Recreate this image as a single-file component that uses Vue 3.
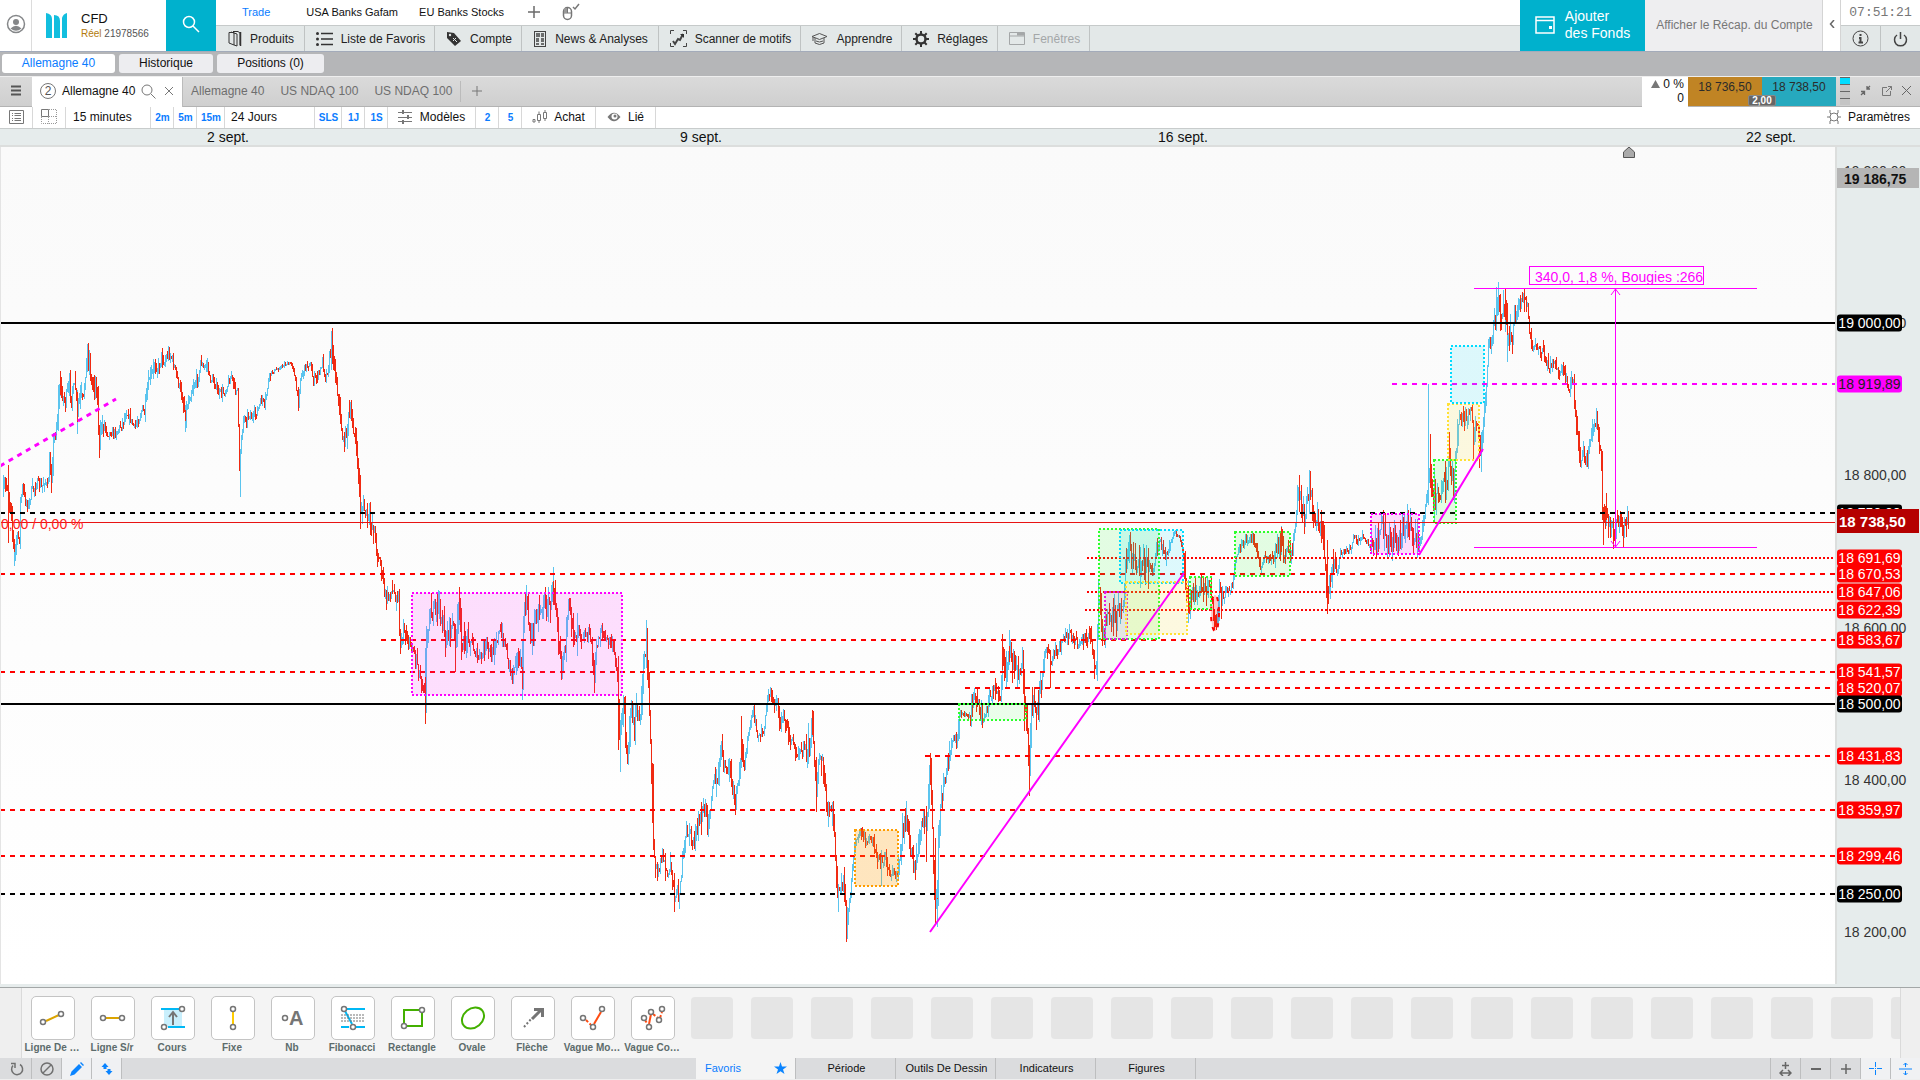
<script setup>
import { ref } from 'vue'

const espaces = ['Trade', 'USA Banks Gafam', 'EU Banks Stocks']
const vues = ['Allemagne 40', 'Historique', 'Positions (0)']
const vueActive = ref('Allemagne 40')
const autresOnglets = ['Allemagne 40', 'US NDAQ 100', 'US NDAQ 100']

const ongletsBas = ['Favoris', 'Période', 'Outils De Dessin', 'Indicateurs', 'Figures']
const ongletBas = ref('Favoris')

const VUE = { haut: 147, largeur: 1835, hauteur: 837 }

const prixVersY = (prix) => 323 + (19000 - prix) * 0.7613
const topPourcent = (y) => `${((y - VUE.haut) / VUE.hauteur) * 100}%`

const dates = [
  { texte: '2 sept.', x: 228 },
  { texte: '9 sept.', x: 701 },
  { texte: '16 sept.', x: 1183 },
  { texte: '22 sept.', x: 1771 },
]

const graduations = ['19 200,00', '19 000,00', '18 800,00', '18 600,00', '18 400,00', '18 200,00']

const niveaux = [
  { texte: '19 000,00', x: 0, type: 'plein', ton: 'noir' },
  { texte: '18 919,89', x: 1392, type: 'tiret', ton: 'magenta' },
  { texte: '18 750,00', x: 0, type: 'tiret', ton: 'noir' },
  { texte: '18 691,69', x: 1087, type: 'point', ton: 'rouge' },
  { texte: '18 670,53', x: 0, type: 'tiret', ton: 'rouge' },
  { texte: '18 647,06', x: 1087, type: 'point', ton: 'rouge' },
  { texte: '18 622,39', x: 1085, type: 'point', ton: 'rouge' },
  { texte: '18 583,67', x: 381, type: 'tiret', ton: 'rouge' },
  { texte: '18 541,57', x: 0, type: 'tiret', ton: 'rouge' },
  { texte: '18 520,07', x: 965, type: 'tiret', ton: 'rouge' },
  { texte: '18 500,00', x: 0, type: 'plein', ton: 'noir' },
  { texte: '18 431,83', x: 925, type: 'tiret', ton: 'rouge' },
  { texte: '18 359,97', x: 0, type: 'tiret', ton: 'rouge' },
  { texte: '18 299,46', x: 0, type: 'tiret', ton: 'rouge' },
  { texte: '18 250,00', x: 0, type: 'tiret', ton: 'noir' },
]

const enNombre = (texte) => Number(texte.replace(' ', '').replace(',', '.'))
const yNiveau = (texte) => Math.round(prixVersY(enNombre(texte)))

// x1, y1, x2, y2, couleur, opacité du fond
const zones = [
  [412, 593, 622, 695, '#ff00ff', 0.12],
  [855, 830, 898, 886, '#ff9d00', 0.25],
  [959, 704, 1026, 720, '#2bff2b', 0.09],
  [1099, 529, 1159, 639, '#2bff2b', 0.12],
  [1120, 530, 1183, 583, '#00dcff', 0.12],
  [1105, 592, 1127, 639, '#e51be5', 0.1],
  [1126, 582, 1187, 634, '#ffe135', 0.14],
  [1190, 577, 1211, 609, '#2bff2b', 0.12],
  [1235, 532, 1290, 576, '#2bff2b', 0.12],
  [1371, 514, 1419, 554, '#ff00ff', 0.12],
  [1434, 460, 1456, 523, '#2bff2b', 0.12],
  [1448, 404, 1479, 460, '#ffe135', 0.14],
  [1451, 346, 1484, 403, '#00dcff', 0.12],
]

// amplitude des mèches, puis les points de passage du cours
const parcours = [
  [9, '2,495 4,487 7,484 9,500 11,510 12,530 14,552 16,540 19,536'],
  [6, '20,502 22,487 24,497 28,505 31,491 37,483 41,487 44,480 47,487'],
  [10, '49,468 51,474 53,443 56,427 58,400 60,385 63,397 65,400 69,387 71,393 75,387 77,412 79,397 83,400 85,370 87,352 89,360 91,383 95,380 97,400 99,445 101,427 104,423'],
  [5, '107,433 112,432 116,432 119,427 122,423 126,412 129,417 134,427 138,420 142,408 144,413'],
  [7, '147,390 149,377 152,373 154,363 158,368 161,355 164,363 168,352 171,357 175,370 178,383 182,398 185,415 188,400 192,387 196,380 199,373'],
  [5, '200,360 203,368 207,363 209,378 214,382 218,393 224,392 228,382 231,375 234,388 237,388 238,427 239,460 241,437 243,417 246,418 249,413 252,418 257,410 262,398 264,407 268,380 270,373'],
  [2, '275,370 284,364 291,363 293,368'],
  [5, '295,383 298,402 300,377 304,368 309,362 313,380 316,377 320,370 322,360 325,377 328,367'],
  [10, '331,345 332,348 335,373 338,397 340,420 343,443 346,430 348,417 351,417 354,433 357,460 359,487 360,510 363,507 367,517 371,523'],
  [9, '374,530 376,547 379,560 381,567 384,593 387,600 390,590 394,593 398,597 399,630 401,647 403,627 407,640 412,647 416,657 420,677 424,687'],
  [13, '426,637 429,613 433,613 438,603 440,613 445,640 449,627 453,627 456,635 459,607 461,637 464,650'],
  [9, '467,633 473,647 477,657 481,657 486,643 491,657 495,640 499,633 505,643 508,660 512,673 516,653 520,663 522,685'],
  [13, '523,620 526,600 528,620 531,640 535,613 539,610 543,603 547,607 550,603 553,585 555,597 558,633 561,663 565,640 568,613 571,613 575,637 578,620'],
  [7, '581,637 588,633 591,643 594,680 596,647 601,627 605,640 610,640 613,650 617,670'],
  [14, '619,740 621,720 623,707 625,733 627,750 629,727 631,708 634,727 637,713 640,723 642,690 643,663 646,645 648,680 650,740 652,807 653,840'],
  [9, '655,863 659,867 662,853 665,867 668,877 670,863 673,883 674,895 678,895 680,880 683,853 686,833 689,830 692,842 696,833 700,817'],
  [12, '703,810 707,813 710,803 713,777 717,787 719,760 722,750 726,777 729,760 732,790 734,798 738,787 741,745 744,763'],
  [6, '747,740 750,723 753,713 756,730 759,737 764,727 767,697 771,695 774,703 777,697'],
  [7, '779,727 782,713 786,727 791,740 796,752 801,747 805,750'],
  [12, '809,743 812,722 814,753 816,793 818,767 822,757 824,790 827,813 830,807 833,817 835,857 837,893 840,893 843,877 845,907 846,930 849,907'],
  [6, '851,880 854,847 857,837 862,833 865,843 872,835 876,857 881,863 885,857 889,870 897,876'],
  [12, '899,857 902,830 905,820 908,830 910,850 914,868 917,853 920,830 923,817 926,823 928,793 930,770 931,800 933,857 935,905 937,900 938,840 941,797 945,777 949,757'],
  [8, '952,740 957,737 959,710'],
  [3, '963,715 969,715'],
  [9, '973,700 977,703 981,715 985,718 987,707 992,690 996,687 1000,697'],
  [15, '1002,657 1005,673 1009,650 1013,657 1018,673 1022,660 1024,707 1027,740 1029,767 1031,713 1034,700 1038,703 1042,670'],
  [7, '1046,643 1050,660 1055,653 1061,643 1068,633 1073,637 1078,648 1082,638 1088,637 1091,637 1094,663 1096,663'],
  [15, '1098,607 1099,593 1101,620 1103,630 1108,620 1112,617 1116,617 1119,600 1123,597'],
  [14, '1125,573 1128,547 1131,560 1133,552 1136,573 1140,560 1143,563 1145,572 1149,563'],
  [6, '1153,570 1156,550 1159,537 1162,547 1166,557 1170,540'],
  [2, '1175,532 1179,537 1183,553'],
  [11, '1185,583 1188,603 1192,590 1197,597 1200,590 1203,593 1208,585 1211,600 1213,607 1216,615 1219,593 1222,600'],
  [5, '1227,590 1232,587 1234,563 1237,553 1242,543 1247,543 1251,535 1255,543 1257,557 1261,567 1265,557 1273,558'],
  [11, '1278,550 1281,543 1284,557 1287,547 1290,565 1292,547 1295,527 1298,490 1301,500 1304,517 1307,497 1310,487 1312,507 1315,517 1318,523'],
  [12, '1323,537 1325,560 1327,590 1329,580 1332,570 1337,568'],
  [4, '1340,553 1345,550 1349,550 1354,535 1357,542 1362,537 1366,542 1370,548'],
  [12, '1374,550 1378,533 1382,527 1385,537 1389,543 1394,537 1398,543 1402,530 1405,528 1407,518 1410,530 1413,540 1415,533 1419,543'],
  [6, '1420,540 1423,520 1427,497'],
  [14, '1430,457 1432,490 1435,503 1437,490 1440,497 1443,480 1447,487 1449,450 1451,477 1453,490 1455,457 1457,433 1459,413'],
  [9, '1462,420 1467,413 1471,413 1473,440 1476,417 1479,437 1481,447 1483,417 1486,383 1488,347 1491,340 1493,323 1496,317'],
  [14, '1497,302 1500,305 1503,315 1505,307 1507,335 1509,335 1512,335 1514,315'],
  [6, '1518,305 1523,298 1524,297 1527,307 1529,330 1532,347 1537,345 1540,350 1543,348 1546,363 1550,367 1554,360 1558,373 1563,367'],
  [9, '1567,383 1569,390 1571,377 1573,383 1575,413 1577,440 1580,460 1583,453 1586,463 1589,440 1593,427 1596,417 1598,440 1601,463'],
  [13, '1602,513 1604,527 1607,515 1611,530 1615,527 1619,525 1623,532 1626,523'],
]

// x, haut, bas, hausse ?
const pointes = [
  [8, 465, 543, 0], [14, 545, 566, 1], [87, 344, 372, 1], [77, 390, 434, 1], [99, 430, 458, 0],
  [60, 371, 395, 0], [185, 405, 432, 1], [240, 450, 497, 1], [239, 427, 471, 0], [331, 331, 370, 1],
  [332, 328, 352, 0], [360, 475, 529, 0], [425, 677, 724, 0], [426, 637, 713, 1], [438, 590, 612, 1],
  [455, 630, 672, 0], [459, 587, 620, 0], [522, 640, 700, 1], [553, 567, 600, 1], [594, 660, 693, 0],
  [618, 665, 750, 0], [620, 720, 772, 1], [646, 620, 668, 1], [647, 628, 680, 0], [653, 764, 850, 0],
  [674, 890, 912, 0], [722, 734, 757, 0], [741, 716, 760, 0], [771, 688, 700, 0], [812, 710, 735, 0],
  [816, 757, 812, 0], [846, 920, 942, 0], [881, 850, 886, 1], [926, 806, 862, 0], [930, 753, 785, 0],
  [935, 838, 919, 0], [937, 880, 927, 1], [1002, 634, 670, 0], [1009, 630, 665, 1], [1024, 682, 731, 0],
  [1029, 745, 796, 0], [1050, 650, 688, 0], [1094, 655, 679, 0], [1098, 580, 640, 1], [1188, 580, 623, 1],
  [1185, 551, 590, 0], [1281, 527, 552, 0], [1299, 475, 500, 0], [1310, 471, 500, 0], [1327, 540, 614, 0],
  [1330, 575, 599, 1], [1407, 505, 525, 1], [1428, 384, 502, 1], [1430, 434, 488, 0], [1434, 470, 523, 1],
  [1449, 432, 460, 0], [1473, 420, 459, 0], [1479, 445, 468, 0], [1481, 440, 472, 1], [1496, 287, 320, 1],
  [1505, 289, 320, 0], [1507, 325, 362, 1], [1524, 289, 312, 0], [1602, 451, 520, 0], [1603, 510, 545, 0],
  [1606, 493, 520, 0], [1623, 525, 547, 0], [1627, 506, 525, 1], [1628, 511, 529, 0],
]

function tracerBougies() {
  let graine = 7
  const alea = () => {
    graine = (graine * 16807) % 2147483647
    return graine / 2147483647
  }
  const points = parcours.flatMap(([amp, suite]) =>
    suite.split(' ').map((p) => [...p.split(',').map(Number), amp]),
  )
  const traces = { hausse: '', baisse: '' }
  let precedent = points[0][1]
  for (let i = 1; i < points.length; i++) {
    const [x0, y0] = points[i - 1]
    const [x1, y1, amp] = points[i]
    for (let x = x0 + 1; x <= x1; x++) {
      const y = y0 + ((y1 - y0) * (x - x0)) / (x1 - x0) + (alea() - 0.5) * amp * 1.4
      const haut = Math.round(Math.min(y, precedent) - alea() ** 2 * amp * 1.3)
      const bas = Math.round(Math.max(y, precedent) + alea() ** 2 * amp * 1.3) + 1
      traces[y > precedent ? 'baisse' : 'hausse'] += `M${x + 0.5} ${haut}V${bas}`
      precedent = y
    }
  }
  for (const [x, haut, bas, hausse] of pointes) {
    traces[hausse ? 'hausse' : 'baisse'] += `M${x + 0.5} ${haut}V${bas}`
  }
  return traces
}

const bougies = tracerBougies()

// t : traits [couleur, chemin, épaisseur, tirets], c : poignées rondes
const outils = [
  { nom: 'Ligne De …', t: [['#dba400', 'M15 25L28 19', 2]], c: [[12, 26], [30, 18]] },
  { nom: 'Ligne S/r', t: [['#dba400', 'M15 22H28', 2]], c: [[12, 22], [31, 22]] },
  { nom: 'Cours', fond: true, t: [['#00b8f5', 'M10 13H28M17 31H34', 2], ['#757575', 'M22 29V17M18 21L22 16L26 21', 2]], c: [[31, 13], [13, 31]] },
  { nom: 'Fixe', t: [['#ffcc00', 'M22 16V28', 2]], c: [[22, 13], [22, 31]] },
  { nom: 'Nb', lettre: 'A', t: [], c: [[14, 22]] },
  { nom: 'Fibonacci', t: [['#00b8f5', 'M16 13H34M10 31H18M25 31H34M14 15L21 28', 2], ['#757575', 'M10 19H34M10 22H34M10 25H34', 1, '2 1']], c: [[13, 13], [22, 31]] },
  { nom: 'Rectangle', t: [['#43b000', 'M28 14H13V27M16 30H31V17', 2]], c: [[31, 14], [13, 30]] },
  { nom: 'Ovale', ovale: true, t: [], c: [] },
  { nom: 'Flèche', t: [['#757575', 'M21 23L31 13M23 13.500H31.500V21', 3], ['#757575', 'M13 31L21 22', 2, '2 2']], c: [] },
  { nom: 'Vague Mo…', t: [['#ff4c12', 'M15 24L20 29', 2, '3 2'], ['#ff4c12', 'M23 28L30 16', 2]], c: [[12, 22], [22, 31], [31, 13]] },
  { nom: 'Vague Co…', t: [['#ff4c12', 'M14 24L17 29M22 18L27 22M29 22L31 16', 2, '3 2'], ['#ff4c12', 'M18 28L20 18', 2]], c: [[13, 22], [18, 31], [20, 16], [28, 24], [31, 13]] },
]
</script>

<template>
  <div class="plateforme">
    <header class="entete">
      <button class="profil" aria-label="Profil">
        <svg width="20" height="20" viewBox="0 0 20 20">
          <circle cx="10" cy="10" r="8.500" fill="none" stroke="#858789" stroke-width="1.500" />
          <circle cx="10" cy="8" r="3" fill="#858789" />
          <path d="M4.500 14.500Q10 9 15.500 14.500Q10 19 4.500 14.500Z" fill="#858789" />
        </svg>
      </button>
      <div class="compte">
        <svg width="22" height="26" viewBox="0 0 22 26" fill="#12bede">
          <path d="M0 0Q6 1 6 6V25H0ZM8 2Q14 2 14 8V25H8ZM16 5Q17 1 21 0V25H16Z" />
        </svg>
        <div>
          <div class="compte-type">CFD</div>
          <div class="compte-numero"><b>Réel</b> 21978566</div>
        </div>
      </div>
      <button class="recherche" aria-label="Rechercher">
        <svg width="20" height="20" viewBox="0 0 20 20" fill="none" stroke="#fff" stroke-width="1.500">
          <circle cx="8" cy="8" r="5.500" />
          <path d="M12 12L18 18" />
        </svg>
      </button>

      <div class="navigation">
        <nav class="espaces">
          <a v-for="(e, i) in espaces" :key="e" href="#" :class="{ actif: i === 0 }">{{ e }}</a>
          <button class="nu" aria-label="Ajouter un espace">
            <svg width="14" height="14" viewBox="0 0 14 14"><path d="M7 1V13M1 7H13" stroke="#6b6b6b" stroke-width="1.500" /></svg>
          </button>
          <button class="nu souris" aria-label="Un clic">
            <svg width="18" height="18" viewBox="0 0 18 18" fill="none" stroke="#777">
              <rect x="1.500" y="4.500" width="8" height="12" rx="4" stroke-width="1.500" />
              <path d="M1.500 10H9.500M5.500 4.500V10" />
              <path d="M11 4L13 6L17 1" stroke-width="1.500" />
              <rect x="2" y="5" width="3" height="5" fill="#999" stroke="none" />
            </svg>
          </button>
        </nav>
        <nav class="menu">
          <button class="m-produits">
            <svg width="14" height="16" viewBox="0 0 14 16" fill="none" stroke="#333">
              <path d="M1 1.500H6V14L1 12ZM3 1L9 3V15L6 14M5 .5H10L12 2V14" />
              <path d="M12.500 1V15" stroke-width="1.500" />
            </svg>Produits
          </button>
          <button class="m-favoris">
            <svg width="17" height="14" viewBox="0 0 17 14" fill="#333">
              <path d="M5 1.500H17M5 7H17M5 12.500H17" stroke="#333" stroke-width="1.500" />
              <circle cx="1.500" cy="1.500" r="1.500" /><circle cx="1.500" cy="7" r="1.500" /><circle cx="1.500" cy="12.500" r="1.500" />
            </svg>Liste de Favoris
          </button>
          <button class="m-compte">
            <svg width="16" height="16" viewBox="0 0 16 16">
              <path d="M1 1L8 2L15 10L9 15L1 7Z" fill="#333" />
              <circle cx="4" cy="4" r="1.200" fill="#e3e8e8" />
              <path d="M7 7L11 11M7 10L10 7" stroke="#e3e8e8" />
            </svg>Compte
          </button>
          <button class="m-news">
            <svg width="13" height="16" viewBox="0 0 13 16" fill="none" stroke="#444">
              <rect x=".5" y=".5" width="11" height="15" />
              <path d="M2 3H6M7 3H10M2 5H6M7 5H10M2 8H5M7 8H10M2 10H5M7 10H10M2 13H5M7 13H10" stroke-width="1.300" />
            </svg>News &amp; Analyses
          </button>
          <button class="m-scanner">
            <svg width="17" height="17" viewBox="0 0 17 17" fill="none" stroke="#444">
              <path d="M.5 4V.5H4M13 .5H16.500V4M16.500 13V16.500H13M4 16.500H.5V13" />
              <path d="M3 11L5 14L8 9L10 10L13 4" stroke-width="2" />
              <path d="M10 4H14V8Z" fill="#333" stroke="none" />
            </svg>Scanner de motifs
          </button>
          <button class="m-apprendre">
            <svg width="17" height="14" viewBox="0 0 17 14" fill="none" stroke="#555">
              <path d="M1 4.500L8.500 1.500L16 4.500L8.500 7.500ZM4 6V11Q8.500 14 13 11V6M2 5V9M5 9Q8.500 11 12 9" />
            </svg>Apprendre
          </button>
          <button class="m-reglages">
            <svg width="16" height="16" viewBox="0 0 16 16" fill="none" stroke="#333">
              <circle cx="8" cy="8" r="4.500" stroke-width="2.500" />
              <path d="M8 0V3M8 13V16M0 8H3M13 8H16M2.300 2.300L4.500 4.500M11.500 11.500L13.700 13.700M2.300 13.700L4.500 11.500M11.500 4.500L13.700 2.300" stroke-width="2" />
            </svg>Réglages
          </button>
          <button class="m-fenetres" disabled>
            <svg width="16" height="13" viewBox="0 0 16 13" fill="none" stroke="#a4a7a8">
              <path d="M.5 .5H15.500V12.500H.5ZM.5 4H15.500" /><path d="M8 2H15" stroke-width="3" />
            </svg>Fenêtres
          </button>
        </nav>
      </div>

      <button class="ajouter">
        <svg width="20" height="18" viewBox="0 0 20 18" fill="none" stroke="#fff" stroke-width="1.500">
          <path d="M1 1H19V17H1ZM1 4.500H19" /><path d="M14 11.500H17" stroke-width="3" />
        </svg>
        <span>Ajouter<br />des Fonds</span>
      </button>
      <button class="recap">Afficher le Récap. du Compte</button>
      <button class="replier" aria-label="Replier">
        <svg width="6" height="8" viewBox="0 0 6 8"><path d="M5 0L1.500 4L5 8" fill="none" stroke="#666" stroke-width="1.500" /></svg>
      </button>
      <div class="systeme">
        <time>07:51:21</time>
        <div class="systeme-boutons">
          <button aria-label="Informations">
            <svg width="17" height="17" viewBox="0 0 17 17" fill="none" stroke="#444">
              <circle cx="8.500" cy="8.500" r="7.500" /><path d="M8.500 4V6M7 8H8.500V12M6.500 12.500H11" stroke-width="2" />
            </svg>
          </button>
          <button aria-label="Déconnexion">
            <svg width="15" height="16" viewBox="0 0 15 16" fill="none" stroke="#444" stroke-width="1.500">
              <path d="M7.500 1V8M4 4A6 6 0 1 0 11 4" />
            </svg>
          </button>
        </div>
      </div>
    </header>

    <nav class="vues">
      <button v-for="v in vues" :key="v" :class="{ actif: v === vueActive }" @click="vueActive = v">{{ v }}</button>
    </nav>

    <div class="onglets">
      <button class="hamburger" aria-label="Menu">
        <svg width="10" height="11" viewBox="0 0 10 11"><path d="M0 1.500H10M0 5.500H10M0 9.500H10" stroke="#555" stroke-width="2" /></svg>
      </button>
      <div class="onglet-actif">
        <span class="pastille">2</span>
        <span>Allemagne 40</span>
        <svg width="15" height="15" viewBox="0 0 15 15" fill="none" stroke="#777"><circle cx="6" cy="6" r="5" /><path d="M10 10L14.500 14.500" /></svg>
        <button class="nu" aria-label="Fermer l'onglet">
          <svg width="8" height="8" viewBox="0 0 8 8"><path d="M0 0L8 8M8 0L0 8" stroke="#777" /></svg>
        </button>
      </div>
      <button v-for="(o, i) in autresOnglets" :key="i" class="onglet">{{ o }}</button>
      <button class="nouvel-onglet" aria-label="Nouvel onglet">
        <svg width="10" height="10" viewBox="0 0 10 10"><path d="M5 0V10M0 5H10" stroke="#777" /></svg>
      </button>
      <div class="variation">
        <div><svg width="9" height="8" viewBox="0 0 9 8"><path d="M4.500 0L9 8H0Z" fill="#777" /></svg> 0 %</div>
        <div>0</div>
      </div>
      <div class="cotation">
        <button class="vendre">18 736,50</button>
        <button class="acheter">18 738,50</button>
        <span class="ecart">2,00</span>
      </div>
      <div class="fenetre-actions">
        <svg width="10" height="28" viewBox="0 0 10 28">
          <path d="M0 0H10V28H0Z" fill="#c4c4c4" /><path d="M0 1H10V7H0Z" fill="#00dcff" />
          <path d="M0 .5H10M0 7.500H10M0 14.500H10M0 21.500H10" stroke="#666" />
        </svg>
        <button class="nu" aria-label="Réduire">
          <svg width="11" height="11" viewBox="0 0 11 11" fill="none" stroke="#666"><path d="M1 6.500H4.500V10M4 7L1 10M7 1V4H10M7 4L10 1" stroke-width="1.300" /></svg>
        </button>
        <button class="nu" aria-label="Détacher">
          <svg width="10" height="10" viewBox="0 0 10 10" fill="none" stroke="#777"><path d="M5 1.500H.5V9.500H8.500V5M4 6L9.500 .5M6 .5H9.500V4" /></svg>
        </button>
        <button class="nu" aria-label="Fermer">
          <svg width="9" height="9" viewBox="0 0 9 9"><path d="M0 0L9 9M9 0L0 9" stroke="#666" /></svg>
        </button>
      </div>
    </div>

    <div class="barre">
      <button class="b-liste" aria-label="Liste">
        <svg width="15" height="14" viewBox="0 0 15 14" fill="none" stroke="#777"><path d="M.5 .5H14.500V13.500H.5ZM3 3.500H4M5.500 3.500H12M3 5.500H4M5.500 5.500H12M3 8.500H4M5.500 8.500H12M3 10.500H4M5.500 10.500H12" /></svg>
      </button>
      <button class="b-liste" aria-label="Grille">
        <svg width="16" height="15" viewBox="0 0 16 15" fill="none" stroke="#777"><path d="M.5 .5H7.500V7.500H.5Z" /><path d="M8 .5H15.500V14.500H.5V8M8 7.500H15.500M7.500 8V14.500" stroke="#999" stroke-dasharray="1 1" /></svg>
      </button>
      <button class="b-periode">15 minutes</button>
      <button class="court">2m</button>
      <button class="court">5m</button>
      <button class="court moyen">15m</button>
      <button class="b-duree">24 Jours</button>
      <button class="court large">SLS</button>
      <button class="court">1J</button>
      <button class="court">1S</button>
      <button class="b-modeles">
        <svg width="15" height="14" viewBox="0 0 15 14" stroke="#777" fill="none"><path d="M0 2.500H4M6 2.500H14M0 7.500H9M11 7.500H14M0 11.500H4M6 11.500H14" /><path d="M5 0V4M10 5V9M5 10V14" stroke-width="2" /></svg>Modèles
      </button>
      <button class="court">2</button>
      <button class="court">5</button>
      <button class="b-achat">
        <svg width="15" height="13" viewBox="0 0 15 13" stroke="#777" fill="none"><path d="M1 9.500H3V12H1ZM5.500 4.500H8.500V10.500H5.500ZM7 1.500V4M7 11V13M11.500 2.500H14.500V8.500H11.500ZM13 0V2M13 9V11" /></svg>Achat
      </button>
      <button class="b-lie">
        <svg width="14" height="10" viewBox="0 0 14 10"><path d="M.5 5Q7 -3.500 13.500 5Q7 13.500 .5 5Z" fill="#777" /><circle cx="7.500" cy="4.500" r="3" fill="#fff" /><circle cx="8" cy="4" r="1.500" fill="#777" /></svg>Lié
      </button>
      <button class="b-parametres">
        <svg width="14" height="14" viewBox="0 0 14 14" fill="none" stroke="#777"><circle cx="7" cy="7" r="4" /><path d="M3 0V3L4 4M11 0V3L10 4M3 14V11L4 10M11 14V11L10 10M0 7H3M11 7H14" /></svg>Paramètres
      </button>
    </div>

    <div class="dates">
      <div class="dates-zone">
        <span v-for="d in dates" :key="d.texte" :style="{ left: `${(d.x / VUE.largeur) * 100}%` }">{{ d.texte }}</span>
      </div>
    </div>

    <main class="graphique">
      <svg class="trace" viewBox="1 147 1834 837" preserveAspectRatio="none">
        <g fill="none" stroke-width="1" shape-rendering="crispEdges">
          <path :d="bougies.hausse" stroke="#5bc4ee" />
          <path :d="bougies.baisse" stroke="#f02a12" />
        </g>
        <ellipse cx="1215" cy="613" rx="4" ry="18" fill="#ff0000" fill-opacity=".2" stroke="#ff0000" stroke-width="2" stroke-dasharray="4 6" />
        <g shape-rendering="crispEdges">
          <line
            v-for="n in niveaux"
            :key="n.texte"
            :x1="n.x"
            x2="1836"
            :y1="yNiveau(n.texte)"
            :y2="yNiveau(n.texte)"
            :class="['niveau', n.type, n.ton]"
          />
          <rect
            v-for="(z, i) in zones"
            :key="i"
            :x="z[0]"
            :y="z[1]"
            :width="z[2] - z[0]"
            :height="z[3] - z[1]"
            :fill="z[4]"
            :fill-opacity="z[5]"
            :stroke="z[4]"
            stroke-width="2"
            stroke-dasharray="2 2"
          />
          <line x1="0" y1="522.5" x2="1836" y2="522.5" stroke="#e81414" />
        </g>
        <g stroke="#ff00ff" fill="none" stroke-width="2">
          <path d="M0 466L116 399" stroke-width="3" stroke-dasharray="5 5" />
          <path d="M930 932L1184 573M1419 555L1483 449" />
          <path d="M1474 288.500H1757M1474 547.500H1757M1615.500 289V547M1611 295L1615.500 289L1620 295M1611 541L1615.500 547L1620 541" stroke-width="1" />
          <rect x="1529.500" y="266.500" width="174" height="18" fill="#fcfcfc" stroke-width="1" />
        </g>
        <text x="1535" y="282" fill="#ff00ff">340,0, 1,8 %, Bougies :266</text>
        <text x="1" y="529" fill="#ff2020">0,00 / 0,00 %</text>
        <path d="M1623.500 152L1629 147L1634.500 152V157.500H1623.500Z" fill="#aaa" stroke="#555" />
      </svg>
      <aside class="axe">
        <span v-for="g in graduations" :key="g" class="graduation" :style="{ top: topPourcent(prixVersY(enNombre(g))) }">{{ g }}</span>
        <span
          v-for="n in niveaux"
          :key="n.texte"
          :class="['etiquette', n.ton]"
          :style="{ top: topPourcent(yNiveau(n.texte)) }"
        >{{ n.texte }}</span>
        <span class="curseur" :style="{ top: topPourcent(178) }">19 186,75</span>
        <span class="cours" :style="{ top: topPourcent(521) }">18 738,50</span>
      </aside>
    </main>

    <section class="outils">
      <div class="outils-liste">
        <button v-for="o in outils" :key="o.nom" class="outil">
          <span class="outil-cadre">
            <svg width="44" height="44" viewBox="0 0 44 44" fill="none">
              <rect v-if="o.fond" x="13" y="13" width="18" height="18" fill="#c9effc" />
              <path v-for="(t, i) in o.t" :key="i" :d="t[1]" :stroke="t[0]" :stroke-width="t[2]" :stroke-dasharray="t[3]" />
              <ellipse v-if="o.ovale" cx="22" cy="22" rx="12" ry="9.500" transform="rotate(-40 22 22)" stroke="#43b000" stroke-width="2" />
              <circle v-for="(c, i) in o.c" :key="`c${i}`" :cx="c[0]" :cy="c[1]" r="2.500" fill="#fff" stroke="#757575" stroke-width="1.500" />
              <text v-if="o.lettre" x="18" y="29" class="lettre">{{ o.lettre }}</text>
            </svg>
          </span>
          <span class="outil-nom">{{ o.nom }}</span>
        </button>
        <span v-for="n in 21" :key="n" class="vide"></span>
      </div>
    </section>

    <footer class="pied">
      <button class="p-icone" aria-label="Rétablir">
        <svg width="14" height="14" viewBox="0 0 14 14" fill="none" stroke="#707070" stroke-width="1.500"><path d="M10 2.500A5.500 5.500 0 1 1 3 3.500M1 1.500H5V6" /></svg>
      </button>
      <button class="p-icone" aria-label="Effacer">
        <svg width="14" height="14" viewBox="0 0 14 14" fill="none" stroke="#707070" stroke-width="1.500"><circle cx="7" cy="7" r="6" /><path d="M3 11L11 3" /></svg>
      </button>
      <button class="p-icone clair" aria-label="Dessiner">
        <svg width="14" height="14" viewBox="0 0 14 14" fill="#0a84ff"><path d="M0 14L1.500 9.500L9 2L12 5L4.500 12.500ZM10 1L11 0L14 3L13 4Z" /></svg>
      </button>
      <button class="p-icone clair" aria-label="Trier">
        <svg width="12" height="12" viewBox="0 0 12 12" fill="#0a84ff"><path d="M4 0L7.500 4H5.500V6H2.500V4H.5ZM8 12L4.500 8H6.500V6H9.500V8H11.500Z" /></svg>
      </button>
      <nav class="pied-onglets">
        <button v-for="o in ongletsBas" :key="o" :class="{ actif: o === ongletBas }" @click="ongletBas = o">
          <span>{{ o }}</span>
          <svg v-if="o === 'Favoris'" width="13" height="12" viewBox="0 0 13 12" fill="#0a84ff"><path d="M6.500 0L8 4.500H13L9 7.500L10.500 12L6.500 9.200L2.500 12L4 7.500L0 4.500H5Z" /></svg>
        </button>
      </nav>
      <div class="pied-droite">
        <button class="p-icone" aria-label="Ajuster">
          <svg width="13" height="14" viewBox="0 0 13 14" fill="none" stroke="#666" stroke-width="1.500"><path d="M6.500 0V7M3 3.500H10M1 11H12M4 8L1 11L4 14M9 8L12 11L9 14" /></svg>
        </button>
        <button class="p-icone" aria-label="Zoom arrière">
          <svg width="10" height="10" viewBox="0 0 10 10"><path d="M0 5H10" stroke="#666" stroke-width="2" /></svg>
        </button>
        <button class="p-icone" aria-label="Zoom avant">
          <svg width="10" height="10" viewBox="0 0 10 10"><path d="M0 5H10M5 0V10" stroke="#666" stroke-width="1.500" /></svg>
        </button>
        <button class="p-icone clair" aria-label="Réticule">
          <svg width="13" height="13" viewBox="0 0 13 13"><path d="M0 6.500H5M8 6.500H13M6.500 0V5M6.500 8V13M6 6.500H7" stroke="#0a84ff" /></svg>
        </button>
        <button class="p-icone clair" aria-label="Hauteur">
          <svg width="13" height="14" viewBox="0 0 13 14" fill="none" stroke="#0a84ff"><path d="M0 7H13M6.500 5V1M4.500 3L6.500 1L8.500 3M6.500 9V13M4.500 11L6.500 13L8.500 11" /></svg>
        </button>
      </div>
    </footer>
  </div>
</template>

<style>
body {
  background: #f0f0f0;
}
</style>

<style scoped>
.plateforme {
  display: flex;
  flex-direction: column;
  height: 100vh;
  overflow: hidden;
  font: 12px 'Liberation Sans', Arial, sans-serif;
  color: #111;
}

.plateforme * {
  box-sizing: border-box;
}

button {
  display: flex;
  align-items: center;
  justify-content: center;
  padding: 0;
  border: 0;
  background: none;
  color: inherit;
  font: inherit;
  white-space: nowrap;
  cursor: pointer;
}

svg {
  flex: none;
}

/* En-tête */
.entete {
  display: flex;
  flex: none;
  height: 52px;
  background: #fff;
  border-bottom: 1px solid #a3abba;
}

.profil {
  width: 32px;
  padding-bottom: 4px;
  border-right: 1px solid #dcdcdc;
}

.compte {
  display: flex;
  align-items: center;
  gap: 13px;
  width: 134px;
  padding-left: 14px;
}

.compte-type {
  font-size: 13px;
  line-height: 16px;
}

.compte-numero {
  font-size: 10px;
  line-height: 14px;
  color: #555;
}

.compte-numero b {
  font-weight: 400;
  color: #b27a0c;
}

.recherche {
  width: 50px;
  padding-bottom: 4px;
  background: #00b1cd;
}

.navigation {
  display: flex;
  flex: 1;
  flex-direction: column;
  min-width: 0;
}

.espaces {
  display: flex;
  align-items: center;
  height: 25px;
  padding: 0 0 2px 26px;
  gap: 21px;
  font-size: 11px;
}

.espaces a {
  color: #111;
  text-decoration: none;
}

.espaces a:first-child {
  margin-right: 15px;
}

.espaces a.actif {
  color: #0a7cff;
}

.espaces .nu {
  margin-left: 2px;
}

.espaces .souris {
  margin-left: 0;
}

.menu {
  display: flex;
  flex: 1;
  border-top: 1px solid #c6caca;
  background: #e3e8e8;
  color: #222;
}

.menu button {
  gap: 8px;
  padding-left: 2px;
  border-right: 1px solid #bfc3c3;
}

.menu button:disabled {
  color: #a4a7a8;
}

.m-produits { width: 89px; }
.m-favoris { width: 130px; }
.m-compte { width: 87px; }
.m-news { width: 137px; }
.m-scanner { width: 142px; }
.m-apprendre { width: 101px; }
.m-reglages { width: 96px; }
.m-fenetres { width: 92px; }

.ajouter {
  gap: 10px;
  width: 125px;
  padding-bottom: 2px;
  background: #00b1cd;
  color: #fff;
  font-size: 14px;
  line-height: 17px;
  text-align: left;
}

.recap {
  width: 177px;
  padding: 0 0 2px 2px;
  background: #eeeef0;
  color: #777;
}

.replier {
  width: 19px;
  padding-bottom: 4px;
  border-left: 1px solid #d4d4d4;
  border-right: 1px solid #d4d4d4;
}

.systeme {
  display: flex;
  flex-direction: column;
  width: 79px;
}

.systeme time {
  height: 25px;
  color: #777;
  font: 13px/26px 'Liberation Mono', monospace;
  text-align: center;
}

.systeme-boutons {
  display: flex;
  flex: 1;
  border-top: 1px solid #c6caca;
  background: #e3e8e8;
}

.systeme-boutons button {
  flex: 1;
}

.systeme-boutons button + button {
  border-left: 1px solid #bfc3c3;
}

/* Vues */
.vues {
  display: flex;
  flex: none;
  gap: 4px;
  height: 24px;
  padding: 2px;
  background: #b5b6b8;
}

.vues button {
  width: 94px;
  height: 19px;
  padding-bottom: 2px;
  border-radius: 3px;
  background: #ededf0;
}

.vues button:first-child {
  width: 113px;
}

.vues button:last-child {
  width: 107px;
}

.vues .actif {
  background: #fff;
  color: #0a7cff;
}

/* Onglets du graphique */
.onglets {
  display: flex;
  flex: none;
  height: 31px;
  border-top: 1px solid #eee;
  border-bottom: 1px solid #b3b3b3;
  background: linear-gradient(#dadada, #cfcfcf);
}

.hamburger {
  width: 32px;
  padding-bottom: 2px;
}

.onglet-actif {
  display: flex;
  align-items: center;
  gap: 6px;
  width: 151px;
  height: 30px;
  padding: 0 0 2px 8px;
  background: #fff;
  border-right: 1px solid #bbb;
}

.onglet-actif .nu {
  margin-left: 3px;
}

.pastille {
  width: 16px;
  height: 16px;
  border: 1px solid #777;
  border-radius: 50%;
  color: #555;
  line-height: 14px;
  text-align: center;
}

.onglet {
  padding: 0 8px 2px;
  color: #6e6e6e;
}

.nouvel-onglet {
  width: 32px;
  margin: 4px 0;
  padding-bottom: 2px;
  border-left: 1px solid #bbb;
}

.variation {
  width: 46px;
  height: 30px;
  margin-left: auto;
  padding-right: 4px;
  background: #fff;
  line-height: 14px;
  text-align: right;
}

.cotation {
  position: relative;
  display: flex;
  width: 148px;
  color: #2b2b2b;
}

.cotation button {
  flex: 1;
  padding-bottom: 10px;
}

.vendre {
  background: #c08424;
}

.acheter {
  background: #26a9be;
}

.ecart {
  position: absolute;
  bottom: 0;
  left: 50%;
  width: 28px;
  margin-left: -14px;
  border: 1px solid #888;
  border-radius: 2px;
  background: #666;
  color: #fff;
  font-size: 10px;
  font-weight: 700;
  line-height: 9px;
  text-align: center;
}

.fenetre-actions {
  display: flex;
  align-items: center;
  justify-content: space-between;
  width: 84px;
  padding: 0 9px 2px 4px;
}

/* Barre d'outils */
.barre {
  display: flex;
  flex: none;
  height: 22px;
  background: #fff;
  border-bottom: 1px solid #c8cccc;
}

.barre button {
  gap: 7px;
  padding-bottom: 2px;
  border-right: 1px solid #d8d8d8;
}

.barre .b-liste {
  width: 33px;
}

.barre .b-periode {
  width: 85px;
  padding-left: 7px;
  justify-content: flex-start;
}

.barre .court {
  width: 23px;
  padding: 0 0 0 1px;
  color: #0a7cff;
  font-size: 10px;
  font-weight: 700;
}

.barre .moyen {
  width: 28px;
}

.barre .large {
  width: 27px;
}

.barre .b-duree {
  width: 90px;
  padding-left: 6px;
  justify-content: flex-start;
}

.barre .b-modeles {
  width: 88px;
}

.barre .b-achat {
  width: 74px;
}

.barre .b-lie {
  width: 60px;
}

.barre .b-parametres {
  margin-left: auto;
  padding-right: 10px;
  border-right: 0;
}

/* Graphique */
.dates {
  flex: none;
  height: 18px;
  padding-right: 85px;
  border-bottom: 2px solid #dcdedd;
  background: #e6ecec;
  font-size: 14px;
  line-height: 16px;
}

.dates-zone {
  position: relative;
}

.dates-zone span {
  position: absolute;
  transform: translateX(-50%);
  white-space: nowrap;
}

.graphique {
  display: flex;
  flex: 1;
  min-height: 0;
  border-left: 1px solid #e4e4e4;
  background: linear-gradient(#fafafa, #fff);
}

.trace {
  flex: 1;
  width: 0;
  height: 100%;
  font-size: 14px;
}

.niveau {
  stroke-width: 2;
}

.niveau.tiret {
  stroke-dasharray: 5 5;
}

.niveau.point {
  stroke-dasharray: 2 2;
}

.niveau.noir { stroke: #000; }
.niveau.rouge { stroke: #ff0000; }
.niveau.magenta { stroke: #ff00ff; }

.axe {
  position: relative;
  width: 85px;
  border-left: 2px solid #dcdedd;
  background: #e6ecec;
  font-size: 14px;
  overflow: hidden;
}

.axe span {
  position: absolute;
  left: 0;
  transform: translateY(-50%);
  white-space: nowrap;
}

.axe .graduation {
  left: 7px;
  color: #333;
}

.etiquette {
  width: 65px;
  height: 17px;
  border-radius: 3px;
  color: #fff;
  line-height: 17px;
  text-align: center;
}

.etiquette.noir { background: #000; }
.etiquette.rouge { background: #ff0000; }

.etiquette.magenta {
  background: #ff00ff;
  color: #222;
}

.axe .curseur,
.axe .cours {
  width: 82px;
  height: 20px;
  padding-left: 7px;
  background: #b5b5b5;
  font-weight: 700;
  line-height: 22px;
}

.axe .cours {
  height: 24px;
  padding-left: 2px;
  background: #b50000;
  color: #fff;
  font-size: 15px;
  line-height: 25px;
}

/* Outils de dessin */
.outils {
  flex: none;
  height: 71px;
  margin-top: 3px;
  padding: 0 19px 0 21px;
  border-top: 1px solid #a3a7a7;
  background: #efefef;
  box-shadow: 0 -3px 0 #e6ecec;
}

.outils-liste {
  display: flex;
  gap: 16px;
  height: 70px;
  padding: 8px 0 0 9px;
  border: 1px solid #dadada;
  border-width: 0 1px;
  background: #f4f4f4;
  overflow: hidden;
}

.outil {
  flex: none;
  flex-direction: column;
  justify-content: flex-start;
  width: 44px;
}

.outil-cadre {
  width: 44px;
  height: 44px;
  border: 1px solid #c4c4c4;
  border-radius: 5px;
  background: #fff;
}

.outil-cadre svg {
  margin: -1px;
}

.lettre {
  fill: #757575;
  font-size: 20px;
  font-weight: 700;
}

.outil-nom {
  padding-right: 2px;
  color: #5c6b6b;
  font-size: 10px;
  font-weight: 700;
  line-height: 16px;
}

.vide {
  flex: none;
  width: 42px;
  height: 42px;
  margin: 1px 2px 1px 0;
  border-radius: 4px;
  background: #e5e5e5;
}

/* Pied */
.pied {
  display: flex;
  flex: none;
  height: 22px;
  padding-left: 2px;
  border-bottom: 1px solid #eee;
  background: #dbdcde;
  font-size: 11px;
}

.p-icone {
  width: 30px;
  border-right: 1px solid #bdbebf;
}

.clair {
  background: #f0f1f3;
}

.pied-onglets {
  display: flex;
  margin-left: 574px;
}

.pied-onglets button {
  width: 100px;
  padding: 0 0 1px 2px;
  border-right: 1px solid #bdbebf;
}

.pied-onglets button:first-child {
  justify-content: space-between;
  padding: 0 8px 1px 9px;
}

.pied-onglets .actif {
  background: #f4f4f4;
  color: #0a7cff;
}

.pied-droite {
  display: flex;
  margin-left: auto;
}

.pied-droite .p-icone {
  border-right: 0;
  border-left: 1px solid #bdbebf;
}
</style>
